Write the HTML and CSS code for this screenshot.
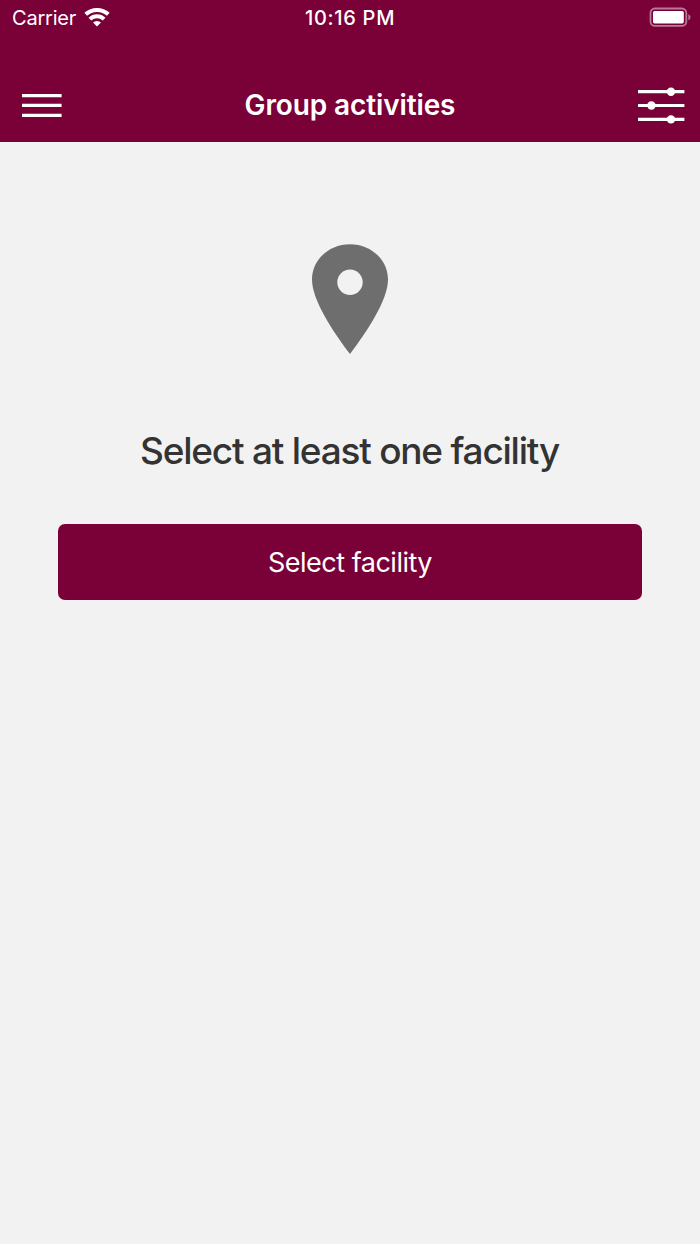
FILE: index.html
```html
<!DOCTYPE html>
<html lang="en">
<head>
    <meta charset="UTF-8">
    <meta name="viewport" content="width=device-width, initial-scale=1.0">
    <title>Group activities</title>
    <link rel="stylesheet" href="styles.css">
</head>
<body>
    <header class="main-header">
        <div class="status-bar">
            <div class="carrier">
                <span class="carrier-name">Carrier</span>
                <svg class="wifi" width="26" height="20" viewBox="0 0 26 20">
                    <path d="M1.7 6.3a16.8 16.8 0 0 1 22.6 0" />
                    <path d="M5.9 11.1a10.4 10.4 0 0 1 14.2 0" />
                    <path class="dot" d="M13 18.4l-4-3.9a5.800 5.800 0 0 1 8 0z" />
                </svg>
            </div>
            <span class="time">10:16 PM</span>
            <svg class="battery" width="42" height="20" viewBox="0 0 42 20">
                <rect class="shell" x=".5" y=".5" width="35.8" height="17.4" rx="4.4" />
                <rect class="level" x="3" y="3" width="30.8" height="12.4" rx="1.6" />
                <path class="cap" d="M38.4 6.2c2.7 1.200 2.700 4.800 0 6z" />
            </svg>
        </div>
        <nav class="nav">
            <button class="icon-button" aria-label="Menu">
                <svg width="40" height="24" viewBox="0 0 40 24">
                    <path d="M0 2.6h39.6M0 12.4h39.6M0 22.3h39.6" />
                </svg>
            </button>
            <h1>Group activities</h1>
            <button class="icon-button" aria-label="Filters">
                <svg width="46" height="38" viewBox="0 0 46 38">
                    <path d="M0 5.7h46.4M0 19.5h46.4M0 33.4h46.4" />
                    <circle cx="33" cy="5.7" r="4.2" />
                    <circle cx="13.4" cy="19.5" r="4.2" />
                    <circle cx="33" cy="33.4" r="4.2" />
                </svg>
            </button>
        </nav>
    </header>

    <main class="content">
        <svg class="pin" width="76" height="110" viewBox="0 0 76 110">
            <path fill-rule="evenodd" d="M38 .2C17 .2 0 15.8 0 35.5 0 56 21 87.5 38 110 55 87.5 76 56 76 35.5 76 15.8 59 .2 38 .2zM38 25.6a12.7 12.7 0 1 1 0 25.4 12.7 12.7 0 0 1 0-25.4z" />
        </svg>
        <h2>Select at least one facility</h2>
        <button class="cta-button">Select facility</button>
    </main>
</body>
</html>
```
FILE: styles.css
```css
* {
    box-sizing: border-box;
    margin: 0;
    padding: 0;
}

body {
    font-family: Inter, "Liberation Sans", sans-serif;
    min-height: 100vh;
    background: #f2f2f2;
    color: #333;
}

button {
    border: none;
    font-family: inherit;
    color: #fff;
    cursor: pointer;
}

svg {
    display: block;
    overflow: visible;
}

/* Header */
.main-header {
    height: 142px;
    background: #7a0038;
    color: #fff;
}

.status-bar {
    display: grid;
    grid-template-columns: 1fr auto 1fr;
    align-items: center;
    height: 36px;
    padding: 0 8px;
}

.carrier {
    display: flex;
    align-items: center;
    gap: 8px;
    padding-left: 4px;
}

.carrier-name {
    font-size: 20px;
    letter-spacing: -0.2px;
}

.wifi {
    fill: none;
    stroke: #fff;
    stroke-width: 4;
}

.wifi .dot {
    fill: #fff;
    stroke: none;
}

.time {
    font-size: 20px;
    font-weight: 500;
    letter-spacing: 0.7px;
}

.battery {
    justify-self: end;
}

.battery .shell {
    fill: none;
    stroke: #b77a99;
    stroke-width: 1.8;
}

.battery .level {
    fill: #fff;
}

.battery .cap {
    fill: #b77a99;
}

.nav {
    display: grid;
    grid-template-columns: 1fr auto 1fr;
    align-items: center;
    height: 38px;
    margin-top: 50px;
    padding: 0 16px;
}

.nav h1 {
    font-size: 28px;
    font-weight: 600;
    letter-spacing: -0.12px;
}

.icon-button {
    justify-self: start;
    margin-left: 6px;
    background: none;
}

.icon-button:last-child {
    justify-self: end;
    margin-left: 0;
}

.icon-button svg {
    fill: #fff;
    stroke: #fff;
    stroke-width: 3.2;
}

.icon-button circle {
    stroke: none;
}

/* Empty state */
.content {
    display: flex;
    flex-direction: column;
    align-items: center;
    padding: 102px 58px 0;
}

.pin {
    fill: #6e6e6e;
}

.content h2 {
    margin-top: 73px;
    padding-right: 1px;
    font-size: 37px;
    font-weight: 500;
    line-height: 48px;
    letter-spacing: -1.23px;
}

.cta-button {
    width: 100%;
    height: 75.5px;
    margin-top: 49px;
    padding-top: 1.5px;
    border-radius: 7px;
    background: #7a0038;
    font-size: 27px;
    letter-spacing: -0.5px;
}
```
